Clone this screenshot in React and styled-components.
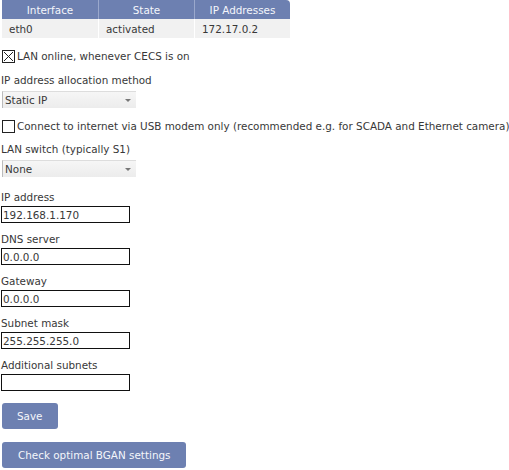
import React from "react";
import styled, { createGlobalStyle } from "styled-components";

const Global = createGlobalStyle`
  body {
    margin: 0;
    background: #fff;
    font-family: "DejaVu Sans", Verdana, sans-serif;
    font-size: 10.4px;
    color: #383838;
  }
`;

const Page = styled.div`
  padding: 0 0 0 1px;
  display: flex;
  flex-direction: column;
  align-items: flex-start;
`;

const Table = styled.table`
  margin-left: 1px;
  border-collapse: separate;
  border-spacing: 0;
  width: 288px;
  table-layout: fixed;
`;

const Th = styled.th`
  background: #6d80b1;
  color: #f4f6fb;
  font-weight: normal;
  height: 19px;
  padding: 0;
  text-align: center;
  border-left: 1px solid #9aa8cc;
  &:first-child { border-left: none; }
  &:last-child { border-top-right-radius: 4px; }
`;

const Td = styled.td`
  background: #f1f1f1;
  height: 19px;
  padding: 0 0 0 7px;
  border-left: 1px solid #fff;
  &:first-child { border-left: none; }
`;

const CheckRow = styled.label`
  display: flex;
  align-items: center;
  gap: 2px;
  margin-top: ${({ $top }) => $top}px;
  height: 14px;
  line-height: 14px;
  white-space: nowrap;
`;

const Box = styled.span`
  width: 11px;
  height: 11px;
  flex: none;
  border: 1px solid #222;
  margin-left: 1px;
  display: flex;
  align-items: center;
  justify-content: center;
  background: #fff;
`;

const Label = styled.div`
  margin-top: ${({ $top }) => $top}px;
  height: 13px;
  line-height: 13px;
`;

const Select = styled.div`
  margin: 4px 0 0 1px;
  width: 134px;
  height: 17px;
  box-sizing: border-box;
  border-left: 1px solid #bbb;
  border-top: 1px solid #ddd;
  background: linear-gradient(#f6f6f6, #ececec);
  display: flex;
  align-items: center;
  justify-content: space-between;
  padding: 0 4px 0 2px;
`;

const Arrow = styled.span`
  width: 0;
  height: 0;
  border-left: 3px solid transparent;
  border-right: 3px solid transparent;
  border-top: 3px solid #777;
  margin-right: 1px;
`;

const Input = styled.input`
  margin-top: 2px;
  width: 129px;
  height: 17px;
  box-sizing: border-box;
  border: 1px solid #111;
  padding: 0 1px;
  font: inherit;
  color: #383838;
  outline: none;
`;

const Button = styled.button`
  margin: ${({ $top }) => $top}px 0 0 1px;
  height: 26px;
  padding: 0 ${({ $pad }) => $pad}px;
  background: #6d80b1;
  color: #f4f6fb;
  border: none;
  border-radius: 3px;
  font: inherit;
  cursor: pointer;
`;

const fields = [
  { label: "IP address", value: "192.168.1.170" },
  { label: "DNS server", value: "0.0.0.0" },
  { label: "Gateway", value: "0.0.0.0" },
  { label: "Subnet mask", value: "255.255.255.0" },
  { label: "Additional subnets", value: "" },
];

export default function App() {
  return (
    <>
      <Global />
      <Page>
        <Table>
          <thead>
            <tr>
              <Th>Interface</Th>
              <Th>State</Th>
              <Th>IP Addresses</Th>
            </tr>
          </thead>
          <tbody>
            <tr>
              <Td>eth0</Td>
              <Td>activated</Td>
              <Td>172.17.0.2</Td>
            </tr>
          </tbody>
        </Table>
        <CheckRow $top={11}>
          <Box>
            <svg width="9" height="9" viewBox="0 0 9 9">
              <path d="M0 0L9 9M9 0L0 9" stroke="#222" strokeWidth="1" />
            </svg>
          </Box>
          LAN online, whenever CECS is on
        </CheckRow>
        <Label $top={11}>IP address allocation method</Label>
        <Select>
          Static IP
          <Arrow />
        </Select>
        <CheckRow $top={11}>
          <Box />
          Connect to internet via USB modem only (recommended e.g. for SCADA and Ethernet camera)
        </CheckRow>
        <Label $top={10}>LAN switch (typically S1)</Label>
        <Select>
          None
          <Arrow />
        </Select>
        {fields.map((f, i) => (
          <React.Fragment key={f.label}>
            <Label $top={i === 0 ? 14 : 10}>{f.label}</Label>
            <Input defaultValue={f.value} />
          </React.Fragment>
        ))}
        <Button $top={12} $pad={15}>Save</Button>
        <Button $top={13} $pad={16}>Check optimal BGAN settings</Button>
      </Page>
    </>
  );
}
